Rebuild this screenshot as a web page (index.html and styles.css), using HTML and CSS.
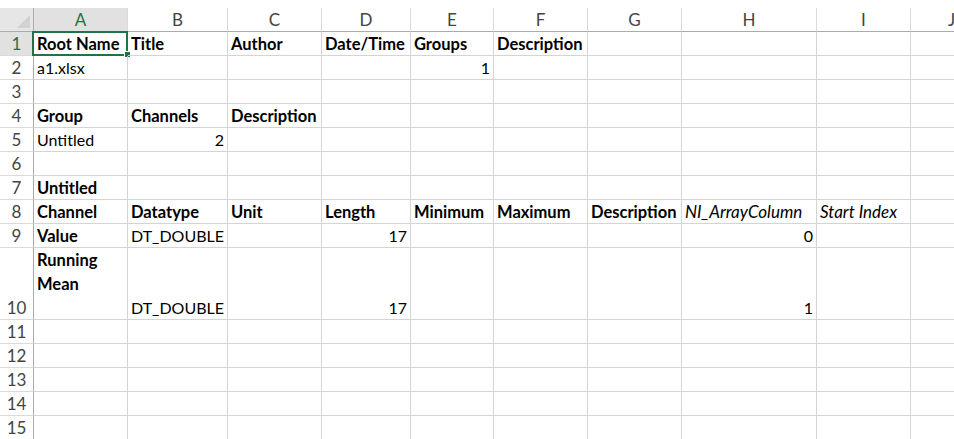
FILE: index.html
```html
<!DOCTYPE html>
<html lang="en">
<head>
<meta charset="utf-8">
<title>Sheet</title>
<link rel="stylesheet" href="styles.css">
</head>
<body>
<div class="sheet">
  <div class="grid">
    <div class="corner"></div>
    <div class="ch sel">A</div><div class="ch">B</div><div class="ch">C</div><div class="ch">D</div><div class="ch">E</div><div class="ch">F</div><div class="ch">G</div><div class="ch">H</div><div class="ch">I</div><div class="ch">J</div>

    <div class="rh sel">1</div>
    <div class="cell b">Root Name<span class="selbox"><span class="handle"></span></span></div>
    <div class="cell b">Title</div><div class="cell b">Author</div><div class="cell b">Date/Time</div><div class="cell b">Groups</div><div class="cell b">Description</div><div class="cell"></div><div class="cell"></div><div class="cell"></div><div class="cell"></div>

    <div class="rh">2</div>
    <div class="cell">a1.xlsx</div><div class="cell"></div><div class="cell"></div><div class="cell"></div><div class="cell r">1</div><div class="cell"></div><div class="cell"></div><div class="cell"></div><div class="cell"></div><div class="cell"></div>

    <div class="rh">3</div>
    <div class="cell"></div><div class="cell"></div><div class="cell"></div><div class="cell"></div><div class="cell"></div><div class="cell"></div><div class="cell"></div><div class="cell"></div><div class="cell"></div><div class="cell"></div>

    <div class="rh">4</div>
    <div class="cell b">Group</div><div class="cell b">Channels</div><div class="cell b">Description</div><div class="cell"></div><div class="cell"></div><div class="cell"></div><div class="cell"></div><div class="cell"></div><div class="cell"></div><div class="cell"></div>

    <div class="rh">5</div>
    <div class="cell">Untitled</div><div class="cell r">2</div><div class="cell"></div><div class="cell"></div><div class="cell"></div><div class="cell"></div><div class="cell"></div><div class="cell"></div><div class="cell"></div><div class="cell"></div>

    <div class="rh">6</div>
    <div class="cell"></div><div class="cell"></div><div class="cell"></div><div class="cell"></div><div class="cell"></div><div class="cell"></div><div class="cell"></div><div class="cell"></div><div class="cell"></div><div class="cell"></div>

    <div class="rh">7</div>
    <div class="cell b">Untitled</div><div class="cell"></div><div class="cell"></div><div class="cell"></div><div class="cell"></div><div class="cell"></div><div class="cell"></div><div class="cell"></div><div class="cell"></div><div class="cell"></div>

    <div class="rh">8</div>
    <div class="cell b">Channel</div><div class="cell b">Datatype</div><div class="cell b">Unit</div><div class="cell b">Length</div><div class="cell b">Minimum</div><div class="cell b">Maximum</div><div class="cell b">Description</div><div class="cell i">NI_ArrayColumn</div><div class="cell i">Start Index</div><div class="cell"></div>

    <div class="rh">9</div>
    <div class="cell b">Value</div><div class="cell">DT_DOUBLE</div><div class="cell"></div><div class="cell r">17</div><div class="cell"></div><div class="cell"></div><div class="cell"></div><div class="cell r">0</div><div class="cell"></div><div class="cell"></div>

    <div class="rh">10</div>
    <div class="cell b top">Running<br>Mean</div><div class="cell">DT_DOUBLE</div><div class="cell"></div><div class="cell r">17</div><div class="cell"></div><div class="cell"></div><div class="cell"></div><div class="cell r">1</div><div class="cell"></div><div class="cell"></div>

    <div class="rh">11</div>
    <div class="cell"></div><div class="cell"></div><div class="cell"></div><div class="cell"></div><div class="cell"></div><div class="cell"></div><div class="cell"></div><div class="cell"></div><div class="cell"></div><div class="cell"></div>

    <div class="rh">12</div>
    <div class="cell"></div><div class="cell"></div><div class="cell"></div><div class="cell"></div><div class="cell"></div><div class="cell"></div><div class="cell"></div><div class="cell"></div><div class="cell"></div><div class="cell"></div>

    <div class="rh">13</div>
    <div class="cell"></div><div class="cell"></div><div class="cell"></div><div class="cell"></div><div class="cell"></div><div class="cell"></div><div class="cell"></div><div class="cell"></div><div class="cell"></div><div class="cell"></div>

    <div class="rh">14</div>
    <div class="cell"></div><div class="cell"></div><div class="cell"></div><div class="cell"></div><div class="cell"></div><div class="cell"></div><div class="cell"></div><div class="cell"></div><div class="cell"></div><div class="cell"></div>

    <div class="rh">15</div>
    <div class="cell"></div><div class="cell"></div><div class="cell"></div><div class="cell"></div><div class="cell"></div><div class="cell"></div><div class="cell"></div><div class="cell"></div><div class="cell"></div><div class="cell"></div>
  </div>
</div>
</body>
</html>
```

FILE: styles.css
```css
html, body {
  margin: 0;
  padding: 0;
  background: #ffffff;
  overflow: hidden;
}

body {
  font-family: Lato, "Open Sans", sans-serif;
  font-size: 16px;
  color: #000000;
}

.sheet {
  padding-top: 8px;
}

.grid {
  display: grid;
  grid-template-columns: 34px 94px 100px 94px 89px 83px 94px 94px 135px 94px 82px;
  grid-template-rows: 24px repeat(9, 24px) 72px repeat(5, 24px);
  width: 993px;
}

.cell {
  position: relative;
  display: flex;
  align-items: flex-end;
  padding: 0 3px;
  line-height: 22px;
  white-space: nowrap;
  border-right: 1px solid #d4d4d4;
  border-bottom: 1px solid #d4d4d4;
}

.cell.b {
  font-weight: 700;
  font-size: 16.5px;
}

.cell.i {
  font-style: italic;
  font-size: 17px;
}

.cell.r {
  justify-content: flex-end;
}

.cell.top {
  align-items: flex-start;
  line-height: 24px;
}

.corner {
  position: relative;
  background: #e6e6e6;
  border-right: 1px solid #ababab;
  border-bottom: 1px solid #ababab;
}

.corner::after {
  content: "";
  position: absolute;
  right: 3px;
  bottom: 3px;
  width: 0;
  height: 0;
  border-left: 13px solid transparent;
  border-bottom: 13px solid #d2d2d2;
}

.ch {
  display: flex;
  align-items: flex-end;
  justify-content: center;
  line-height: 23px;
  font-size: 17px;
  color: #444444;
  background: #ffffff;
  border-right: 1px solid #dadada;
  border-bottom: 1px solid #ababab;
}

.rh {
  display: flex;
  align-items: flex-end;
  justify-content: center;
  line-height: 23px;
  font-size: 17px;
  color: #444444;
  background: #ffffff;
  border-right: 1px solid #ababab;
  border-bottom: 1px solid #dadada;
}

.ch.sel, .rh.sel {
  background: #e1e1e1;
  color: #217346;
}

.selbox {
  position: absolute;
  left: -2px;
  top: -1px;
  width: 96px;
  height: 25px;
  box-sizing: border-box;
  border: 2px solid #217346;
}

.handle {
  position: absolute;
  right: -5px;
  bottom: -4px;
  width: 5px;
  height: 5px;
  background: #217346;
  border: 1px solid #ffffff;
}
```
